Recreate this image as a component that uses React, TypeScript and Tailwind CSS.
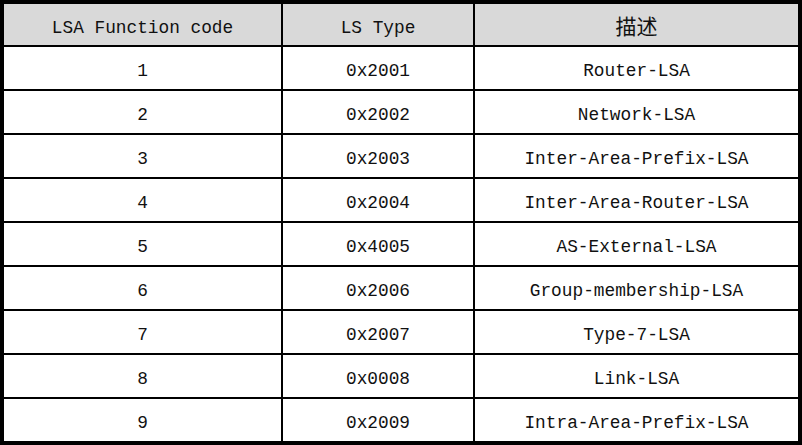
const rows = [
  ['1', '0x2001', 'Router-LSA'],
  ['2', '0x2002', 'Network-LSA'],
  ['3', '0x2003', 'Inter-Area-Prefix-LSA'],
  ['4', '0x2004', 'Inter-Area-Router-LSA'],
  ['5', '0x4005', 'AS-External-LSA'],
  ['6', '0x2006', 'Group-membership-LSA'],
  ['7', '0x2007', 'Type-7-LSA'],
  ['8', '0x0008', 'Link-LSA'],
  ['9', '0x2009', 'Intra-Area-Prefix-LSA'],
]

const cell = 'flex items-center justify-center pt-[6px] whitespace-pre'

export default function App() {
  return (
    <div className="h-[445px] w-[802px] bg-white font-['Liberation_Mono','Noto_Sans_CJK_SC',monospace] text-[17.8px] text-[#111]">
      <div className="flex h-full flex-col border-4 border-black">
        {/* Header */}
        <div className="grid h-[41px] grid-cols-[277px_192px_1fr] bg-[#d9d9d9]">
          <div className={`${cell} pt-[7px]`}>LSA Function code</div>
          <div className={`${cell} pt-[7px] border-l-2 border-black`}>LS Type</div>
          <div className="flex items-center justify-center border-l-2 border-black pt-[3px] font-['Noto_Sans_CJK_SC',sans-serif] text-[21px]">描述</div>
        </div>

        {rows.map(([code, type, desc]) => (
          <div key={code} className="grid h-[44px] grid-cols-[277px_192px_1fr] border-t-2 border-black">
            <div className={cell}>{code}</div>
            <div className={`${cell} border-l-2 border-black`}>{type}</div>
            <div className={`${cell} border-l-2 border-black`}>{desc}</div>
          </div>
        ))}
      </div>
    </div>
  )
}
